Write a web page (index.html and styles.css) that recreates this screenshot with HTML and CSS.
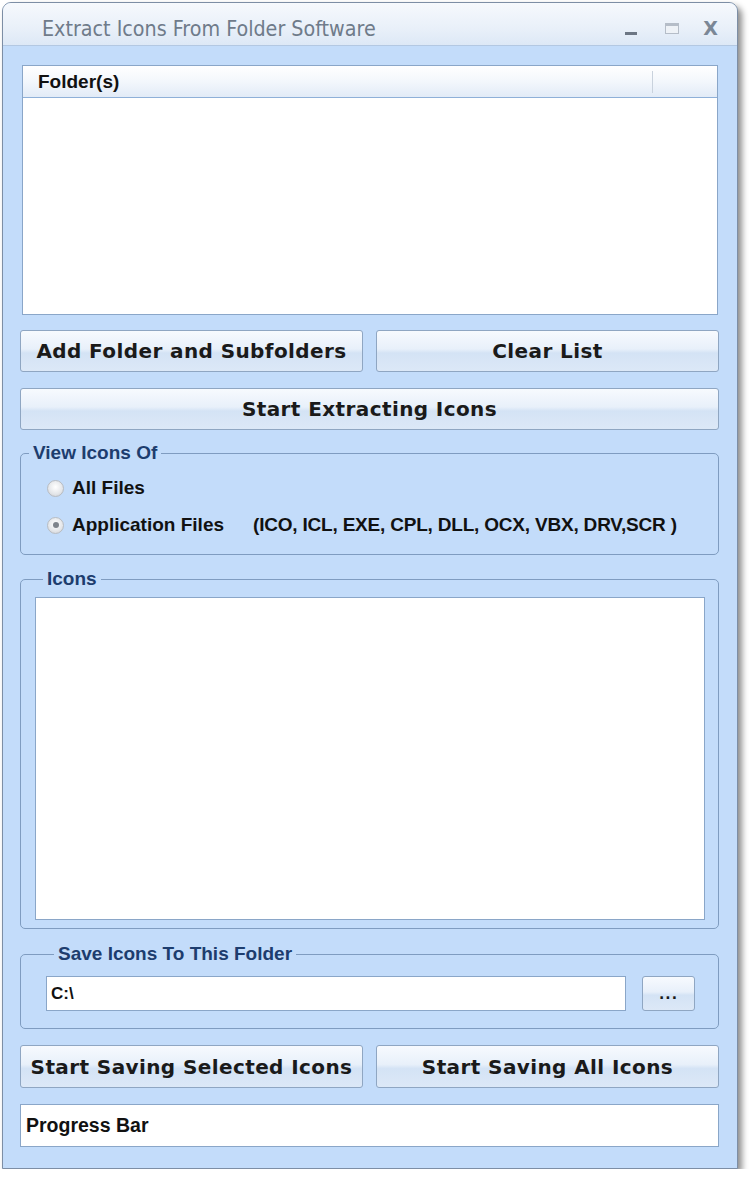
FILE: index.html
```html
<!DOCTYPE html>
<html lang="en">
<head>
    <meta charset="UTF-8">
    <meta name="viewport" content="width=device-width, initial-scale=1.0">
    <title>Extract Icons From Folder Software</title>
    <link rel="stylesheet" href="styles.css">
</head>
<body>

    <div class="window">
        <!-- Title bar -->
        <div class="title-bar">
            <span class="title">Extract Icons From Folder Software</span>
            <div class="controls">
                <span class="ctl ctl-min"></span>
                <span class="ctl ctl-max"></span>
                <span class="ctl ctl-close">X</span>
            </div>
        </div>

        <div class="client">
            <!-- Folder list -->
            <div class="folder-list">
                <div class="list-header">
                    <span class="col-title">Folder(s)</span>
                    <span class="col-sep"></span>
                </div>
            </div>

            <div class="btn-row">
                <button class="btn">Add Folder and Subfolders</button>
                <button class="btn">Clear List</button>
            </div>
            <button class="btn btn-wide">Start Extracting Icons</button>

            <fieldset class="group group-view">
                <legend>View Icons Of</legend>
                <div class="radios">
                    <label class="radio-row">
                        <span class="radio"></span>
                        <span>All Files</span>
                    </label>
                    <label class="radio-row">
                        <span class="radio checked"></span>
                        <span class="radio-text">Application Files</span>
                        <span class="types">(ICO, ICL, EXE, CPL, DLL, OCX, VBX, DRV,SCR )</span>
                    </label>
                </div>
            </fieldset>

            <fieldset class="group group-icons">
                <legend>Icons</legend>
                <div class="icon-box"></div>
            </fieldset>

            <fieldset class="group group-save">
                <legend>Save Icons To This Folder</legend>
                <div class="save-row">
                    <input type="text" class="path" value="C:\">
                    <button class="btn btn-browse">...</button>
                </div>
            </fieldset>

            <div class="btn-row btn-row-save">
                <button class="btn">Start Saving Selected Icons</button>
                <button class="btn">Start Saving All Icons</button>
            </div>

            <div class="progress">Progress Bar</div>
        </div>
    </div>

</body>
</html>
```

FILE: styles.css
```css
body {
    margin: 0;
    padding: 0;
    background-color: #ffffff;
    font-family: 'Liberation Sans', Arial, sans-serif;
}
.window {
    margin: 2px 0 0 2px;
    width: 734px;
    border: 1px solid #7d8ea5;
    border-radius: 9px 9px 0 0;
    background: #c3dcfa;
    box-shadow: 4px 4px 6px rgba(0, 0, 0, 0.45);
    overflow: hidden;
}
.title-bar {
    height: 43px;
    display: flex;
    align-items: center;
    justify-content: space-between;
    padding: 8px 19px 0 39px;
    box-sizing: border-box;
    background: linear-gradient(#f6f9fd, #e9f0f9 60%, #dde8f6);
    border-bottom: 1px solid #b3c8e2;
}
.title {
    font-family: 'DejaVu Sans Condensed', 'DejaVu Sans', sans-serif;
    font-stretch: condensed;
    font-size: 21.3px;
    color: #6f7b8a;
}
.controls {
    display: flex;
    align-items: center;
}
.ctl {
    display: block;
}
.ctl-min {
    width: 12px;
    height: 3px;
    margin-top: 10px;
    margin-right: 28px;
    background: #6c7684;
}
.ctl-max {
    width: 12px;
    height: 7px;
    margin-right: 24px;
    border: 1px solid #b5bdc8;
    border-top: 3px solid #b5bdc8;
    background: #eef2f7;
}
.ctl-close {
    font-family: 'DejaVu Sans', sans-serif;
    font-weight: bold;
    font-size: 19px;
    color: #7b8796;
}
.client {
    padding: 19px 18px 21px 17px;
}
.folder-list {
    height: 248px;
    margin: 0 1px 0 2px;
    background: #ffffff;
    border: 1px solid #8aa6c8;
}
.list-header {
    height: 31px;
    display: flex;
    align-items: center;
    justify-content: space-between;
    background: linear-gradient(#ffffff, #f3f7fc 50%, #e2ebf7);
    border-bottom: 1px solid #8fb0d8;
}
.col-title {
    padding-left: 15px;
    font-size: 19px;
    font-weight: bold;
    color: #111111;
}
.col-sep {
    width: 1px;
    height: 22px;
    margin-right: 64px;
    background: #c9d2dd;
}
.btn-row {
    display: flex;
    gap: 13px;
    margin-top: 15px;
}
.btn {
    flex: 1;
    height: 42px;
    padding: 0;
    font-family: 'DejaVu Sans', sans-serif;
    font-weight: bold;
    font-size: 20px;
    letter-spacing: 0.4px;
    color: #1a1a1a;
    border: 1px solid #8fa6c2;
    border-radius: 3px;
    background: linear-gradient(#f7fafe, #e8f0fa 45%, #d4e3f5 55%, #dce8f7);
    cursor: pointer;
}
.btn-wide {
    display: block;
    width: 100%;
    margin-top: 16px;
}
.group {
    margin: 13px 0 0 0;
    padding: 0;
    border: 1px solid #7f9cc0;
    border-radius: 5px;
}
.group legend {
    margin-left: 8px;
    padding: 0 4px;
    font-size: 19px;
    line-height: 20px;
    font-weight: bold;
    color: #1d3d6e;
}
.radios {
    padding: 13px 0 17px 26px;
}
.radio-row {
    display: flex;
    align-items: center;
    height: 24px;
    font-size: 19px;
    font-weight: bold;
    color: #111111;
}
.radio-row + .radio-row {
    margin-top: 13px;
}
.radio {
    width: 15px;
    height: 15px;
    margin-right: 8px;
    border: 1px solid #b8bcc2;
    border-radius: 50%;
    background: radial-gradient(circle at 50% 40%, #ffffff, #e4e6e9 60%, #c9ccd1);
    display: flex;
    align-items: center;
    justify-content: center;
}
.radio.checked::after {
    content: "";
    width: 6px;
    height: 6px;
    border-radius: 50%;
    background: #7d838b;
}
.radio-text {
    width: 181px;
}
.types {
    font-size: 19px;
    letter-spacing: -0.2px;
}
.group-icons {
    margin-top: 14px;
    padding: 8px 13px 8px 14px;
}
.icon-box {
    height: 321px;
    background: #ffffff;
    border: 1px solid #8aa6c8;
}
.group-save {
    margin-top: 15px;
    padding: 12px 23px 17px 25px;
}
.save-row {
    display: flex;
    gap: 16px;
}
.path {
    flex: 1;
    height: 35px;
    box-sizing: border-box;
    padding: 0 4px;
    font-family: 'Liberation Sans', Arial, sans-serif;
    font-size: 17px;
    font-weight: bold;
    color: #111111;
    border: 1px solid #8aa6c8;
    background: #ffffff;
}
.btn-browse {
    flex: none;
    width: 53px;
    height: 35px;
    font-size: 14px;
    letter-spacing: 1px;
}
.btn-row-save {
    margin-top: 16px;
}
.btn-row-save .btn {
    height: 43px;
}
.progress {
    margin-top: 16px;
    height: 41px;
    display: flex;
    align-items: center;
    padding-left: 5px;
    background: #ffffff;
    border: 1px solid #8aa6c8;
    font-size: 19.5px;
    font-weight: bold;
    color: #111111;
}
```
